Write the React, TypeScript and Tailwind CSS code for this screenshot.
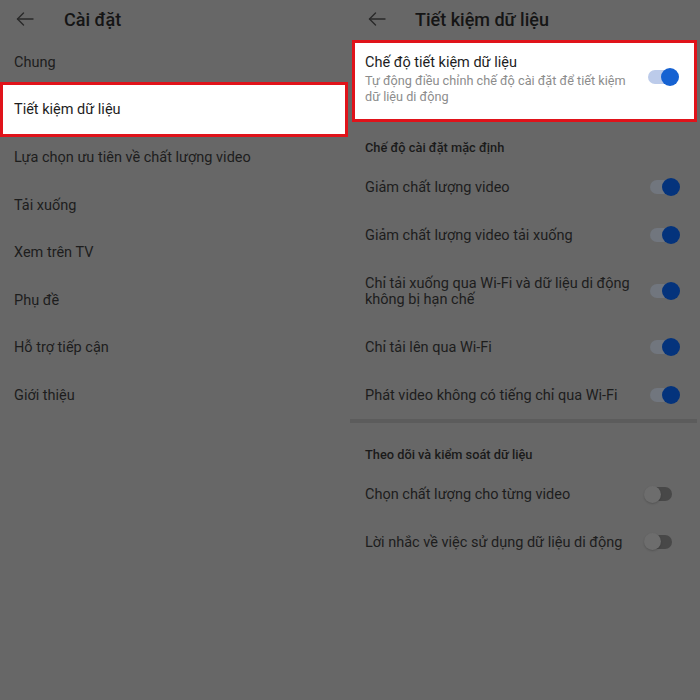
import React from "react";

const Arrow = () => (
  <svg width="20" height="20" viewBox="0 0 20 20" fill="none" stroke="#2a2a2a" strokeWidth="1.4" strokeLinecap="round" strokeLinejoin="round">
    <path d="M18 10H2.5" />
    <path d="M8.5 4L2.5 10L8.5 16" />
  </svg>
);

type TState = "on" | "onBright" | "off";

const Toggle = ({ state }: { state: TState }) => {
  if (state === "onBright") {
    return (
      <div className="relative w-[31px] h-[18px] flex items-center shrink-0">
        <div className="absolute left-0 right-[4px] h-[14px] rounded-full bg-[#bccbea]" />
        <div className="absolute right-0 w-[18px] h-[18px] rounded-full bg-[#1662d2]" />
      </div>
    );
  }
  if (state === "on") {
    return (
      <div className="relative w-[30px] h-[18px] flex items-center shrink-0">
        <div className="absolute left-0 right-[4px] h-[14px] rounded-full bg-[#71767e]" />
        <div className="absolute right-0 w-[18px] h-[18px] rounded-full bg-[#04337c]" />
      </div>
    );
  }
  return (
    <div className="relative w-[28px] h-[18px] flex items-center shrink-0">
      <div className="absolute left-[6px] right-0 h-[14px] rounded-full bg-[#484848]" />
      <div className="absolute left-0 w-[17px] h-[17px] rounded-full bg-[#6d6d6d] shadow-[0_1px_2px_rgba(0,0,0,0.18)]" />
    </div>
  );
};

const leftItems = [
  "Lựa chọn ưu tiên về chất lượng video",
  "Tải xuống",
  "Xem trên TV",
  "Phụ đề",
  "Hỗ trợ tiếp cận",
  "Giới thiệu",
];

const Row = ({ lines, state, tall }: { lines: string[]; state: TState; tall?: boolean }) => (
  <div className={`flex items-center justify-between pl-[15px] pr-[20px] ${tall ? "h-[64px]" : "h-[48px]"}`}>
    <div className="text-[14.5px] leading-[16px] text-[#1d1d1d] pt-[2px]">
      {lines.map((l) => (
        <div key={l}>{l}</div>
      ))}
    </div>
    <Toggle state={state} />
  </div>
);

export default function App() {
  return (
    <div className="flex w-[700px] h-[700px] bg-[#676767] overflow-hidden" style={{ fontFamily: "Roboto, 'Noto Sans', sans-serif" }}>
      {/* Left panel */}
      <div className="w-[350px] h-full flex flex-col">
        <div className="h-[38px] flex items-center pl-[15px]">
          <Arrow />
          <span className="ml-[29px] text-[18px] font-medium text-[#151515]">Cài đặt</span>
        </div>
        <div className="h-[47.5px] flex items-center pl-[14px] pt-[2px] text-[14.5px] text-[#1d1d1d]">Chung</div>
        <div className="h-[55px] -my-[3.5px] mr-[2px] flex items-center pl-[11px] pt-[1px] text-[14.5px] text-[#1d1d1d] bg-white border-[3px] border-[#e0131a]">
          Tiết kiệm dữ liệu
        </div>
        {leftItems.map((t) => (
          <div key={t} className="h-[47.5px] flex items-center pl-[14px] pt-[2px] text-[14.5px] text-[#1d1d1d]">
            {t}
          </div>
        ))}
      </div>

      {/* Right panel */}
      <div className="w-[350px] h-full flex flex-col">
        <div className="h-[38px] flex items-center pl-[17px]">
          <Arrow />
          <span className="ml-[28px] text-[18px] font-medium text-[#151515]">Tiết kiệm dữ liệu</span>
        </div>
        <div className="mt-[2px] h-[82px] ml-[2px] mr-[3px] bg-white border-[3px] border-[#e0131a] flex items-start justify-between pl-[10px] pr-[15px] pt-[10px]">
          <div>
            <div className="text-[14.5px] leading-[20px] text-[#1d1d1d]">Chế độ tiết kiệm dữ liệu</div>
            <div className="text-[12.7px] leading-[16px] text-[#8c8c8c]">
              <div>Tự động điều chỉnh chế độ cài đặt để tiết kiệm</div>
              <div>dữ liệu di động</div>
            </div>
          </div>
          <div className="mt-[15px]">
            <Toggle state="onBright" />
          </div>
        </div>
        <div className="h-[41px] flex items-end pb-[6px] pl-[15px] text-[12.8px] leading-[18px] font-medium text-[#1a1a1a]">
          Chế độ cài đặt mặc định
        </div>
        <Row lines={["Giảm chất lượng video"]} state="on" />
        <Row lines={["Giảm chất lượng video tải xuống"]} state="on" />
        <Row lines={["Chỉ tải xuống qua Wi-Fi và dữ liệu di động", "không bị hạn chế"]} state="on" tall />
        <Row lines={["Chỉ tải lên qua Wi-Fi"]} state="on" />
        <Row lines={["Phát video không có tiếng chỉ qua Wi-Fi"]} state="on" />
        <div className="h-[4px] bg-[#5c5c5c] mr-[3px]" />
        <div className="h-[47px] flex items-end pb-[6px] pl-[15px] text-[12.8px] leading-[18px] font-medium text-[#1a1a1a]">
          Theo dõi và kiểm soát dữ liệu
        </div>
        <div className="flex items-center justify-between pl-[15px] pr-[28px] h-[48px]">
          <div className="text-[14.5px] text-[#1d1d1d] pt-[2px]">Chọn chất lượng cho từng video</div>
          <Toggle state="off" />
        </div>
        <div className="flex items-center justify-between pl-[15px] pr-[28px] h-[47px]">
          <div className="text-[14.5px] text-[#1d1d1d] pt-[2px]">Lời nhắc về việc sử dụng dữ liệu di động</div>
          <Toggle state="off" />
        </div>
      </div>
    </div>
  );
}
